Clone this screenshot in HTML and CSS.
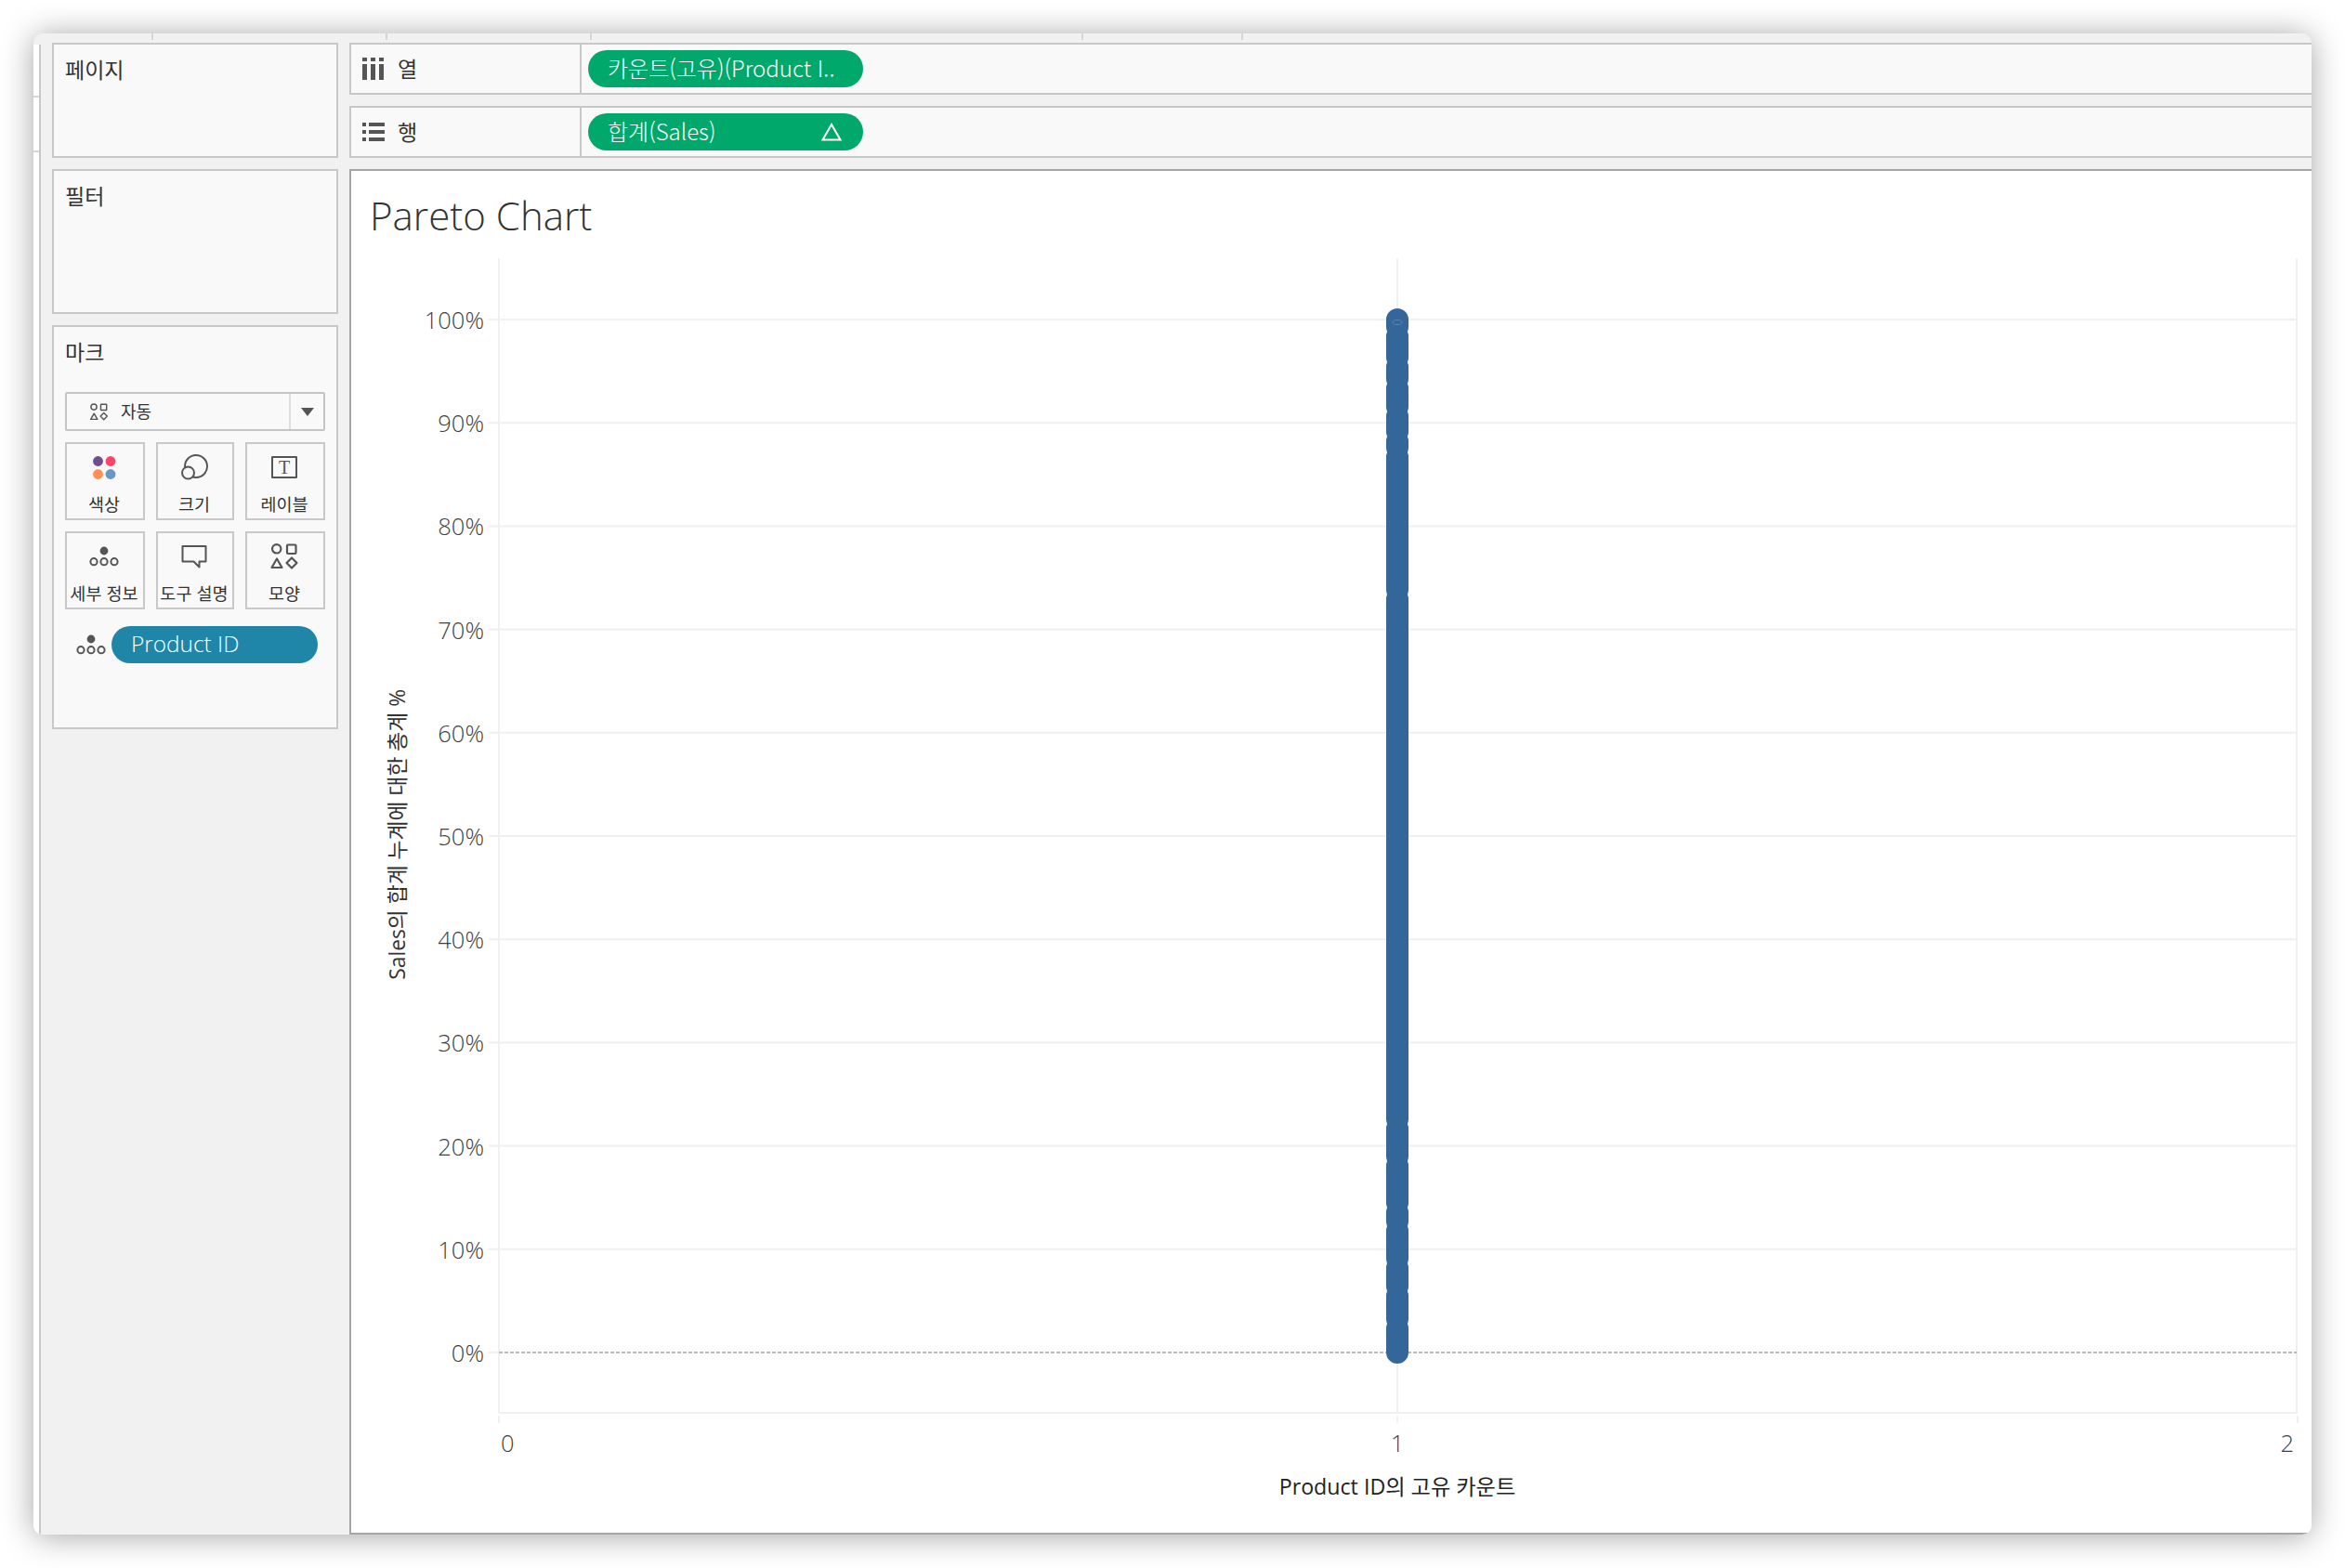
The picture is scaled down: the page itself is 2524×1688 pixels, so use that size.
FILE: index.html
```html
<!DOCTYPE html>
<html lang="ko">
<head>
<meta charset="utf-8">
<title>Pareto Chart</title>
<link rel="stylesheet" href="styles.css">
</head>
<body>
<div class="window">
  <i class="top-tick t1"></i><i class="top-tick t2"></i><i class="top-tick t3"></i><i class="top-tick t4"></i><i class="top-tick t5"></i>
  <div class="strip"><i class="strip-line l1"></i><i class="strip-line l2"></i></div>
  <aside class="sidebar">
    <section class="card card-pages"><h2 class="card-title">페이지</h2></section>
    <section class="card card-filters"><h2 class="card-title">필터</h2></section>
    <section class="card card-marks">
      <h2 class="card-title">마크</h2>
      <div class="select">
        <div class="select-main">
          <svg class="select-icon" viewBox="0 0 32 32"><use href="#shapes"/></svg>
          <span>자동</span>
        </div>
        <div class="select-arrow"><i class="caret"></i></div>
      </div>
      <div class="mark-grid">
        <div class="mark-btn">
          <svg class="mark-icon" viewBox="0 0 32 32"><circle cx="9.5" cy="9.5" r="5.4" fill="#6f4e8c"/><circle cx="23" cy="9.5" r="5.4" fill="#ff4468"/><circle cx="9.5" cy="23.5" r="5.4" fill="#ff8f55"/><circle cx="23" cy="23.5" r="5.4" fill="#6a97c8"/></svg>
          <span>색상</span>
        </div>
        <div class="mark-btn">
          <svg class="mark-icon" viewBox="0 0 32 32"><circle class="ic" cx="18" cy="15" r="12"/><circle class="ic ic-fill" cx="9.5" cy="22" r="6.5"/></svg>
          <span>크기</span>
        </div>
        <div class="mark-btn">
          <svg class="mark-icon" viewBox="0 0 32 32"><rect class="ic" x="3" y="5" width="26" height="22"/><text class="ic-t" x="16" y="23" text-anchor="middle">T</text></svg>
          <span>레이블</span>
        </div>
        <div class="mark-btn">
          <svg class="mark-icon" viewBox="0 0 32 32"><use href="#detail"/></svg>
          <span>세부 정보</span>
        </div>
        <div class="mark-btn">
          <svg class="mark-icon" viewBox="0 0 32 32"><path class="ic" d="M3.5 5H28.5V21.5H21.5V27.5L15.5 21.5H3.5Z"/></svg>
          <span>도구 설명</span>
        </div>
        <div class="mark-btn">
          <svg class="mark-icon" viewBox="0 0 32 32"><use href="#shapes"/></svg>
          <span>모양</span>
        </div>
      </div>
      <div class="mark-field">
        <svg class="field-icon" viewBox="0 0 32 32"><use href="#detail"/></svg>
        <div class="pill pill-blue">Product ID</div>
      </div>
    </section>
  </aside>
  <main class="main">
    <div class="shelf">
      <div class="shelf-label">
        <svg class="shelf-icon" viewBox="0 0 24 24"><path class="solid" d="M0 0h5v4H0zM0 7h5v17H0zM9 0h5v4H9zM9 7h5v17H9zM18 0h5v4h-5zM18 7h5v17h-5z"/></svg>
        <span>열</span>
      </div>
      <div class="shelf-body"><div class="pill pill-green">카운트(고유)(Product I..</div></div>
    </div>
    <div class="shelf">
      <div class="shelf-label">
        <svg class="shelf-icon" viewBox="0 0 24 24"><path class="solid" d="M0 2h4v4H0zM7 2h17v4H7zM0 10h4v4H0zM7 10h17v4H7zM0 18h4v4H0zM7 18h17v4H7z"/></svg>
        <span>행</span>
      </div>
      <div class="shelf-body">
        <div class="pill pill-green pill-split">
          <span>합계(Sales)</span>
          <svg class="delta" viewBox="0 0 22 20"><path d="M11 2L20.5 18.5H1.5Z"/></svg>
        </div>
      </div>
    </div>
    <section class="chart">
      <h1 class="chart-title">Pareto Chart</h1>
      <div class="plot-row">
        <div class="y-title"><span>Sales의 합계 누계에 대한 총계 %</span></div>
        <div class="y-labels">
          <span>100%</span><span>90%</span><span>80%</span><span>70%</span><span>60%</span><span>50%</span><span>40%</span><span>30%</span><span>20%</span><span>10%</span><span>0%</span>
        </div>
        <svg class="plot" viewBox="0 0 1950 1256">
          <path class="grid" d="M0 66H1946M0 177.2H1946M0 288.4H1946M0 399.6H1946M0 510.8H1946M0 622H1946M0 733.2H1946M0 844.4H1946M0 955.6H1946M0 1066.8H1946M0 1178H11M11 1243H1947"/>
          <path class="grid" d="M11 0V1243M978 0V1243M1946 0V1243M11 1246V1254M978 1246V1254M1947 1246V1254"/>
          <path class="zero" d="M11 1178H1946"/>
          <path class="marks" d="M978 66V74M978 84V107M978 117V130M978 140V160M978 170V187M978 197V204M978 214V357M978 367V927M978 937V967M978 977V1017M978 1027V1037M978 1047V1077M978 1087V1107M978 1117V1142M978 1152V1178"/>
          <ellipse class="mark-ring" cx="978" cy="69" rx="5" ry="2.5"/>
        </svg>
      </div>
      <div class="x-axis">
        <div class="x-labels"><span>0</span><span>1</span><span>2</span></div>
        <div class="x-title">Product ID의 고유 카운트</div>
      </div>
    </section>
  </main>
</div>
<svg class="defs" width="0" height="0">
  <defs>
    <g id="shapes" fill="none" stroke="#555" stroke-width="2.2" stroke-linejoin="round">
      <circle cx="7.7" cy="7.8" r="4.7"/>
      <rect x="19" y="3.5" width="9.5" height="9.5" rx="1"/>
      <path d="M2.5 28H13.5L8 18.5Z"/>
      <path d="M24 17.5L29.5 23L24 28.5L18.5 23Z"/>
    </g>
    <g id="detail" fill="none" stroke="#555" stroke-width="2">
      <circle cx="16" cy="10" r="4.4" fill="#555" stroke="none"/>
      <circle cx="5" cy="21.7" r="3.6"/>
      <circle cx="16" cy="21.7" r="3.6"/>
      <circle cx="27" cy="21.7" r="3.6"/>
    </g>
  </defs>
</svg>
</body>
</html>
```

FILE: styles.css
```css
* { box-sizing: border-box; }

html, body { margin: 0; padding: 0; background: #fff; }

body {
  width: 2524px;
  height: 1688px;
  padding: 36px;
  font-family: "Open Sans", "Noto Sans CJK KR", sans-serif;
  color: #333;
  overflow: hidden;
}

.window {
  position: relative;
  display: flex;
  width: 2452px;
  height: 1616px;
  background: #f1f1f1;
  border-radius: 10px;
  box-shadow: 0 2px 34px rgba(0, 0, 0, .36);
  overflow: hidden;
}

.top-tick {
  position: absolute;
  top: 0;
  width: 2px;
  height: 7px;
  background: #d6d6d6;
}
.t1 { left: 127px; }
.t2 { left: 379px; }
.t3 { left: 599px; }
.t4 { left: 1128px; }
.t5 { left: 1300px; }

.strip {
  position: relative;
  flex: none;
  width: 8px;
  margin-top: 12px;
  background: #fff;
  border-right: 2px solid #c8c8c8;
}
.strip-line {
  position: absolute;
  left: 0;
  width: 6px;
  height: 2px;
  background: #d6d6d6;
}
.l1 { top: 55px; }
.l2 { top: 114px; }

.sidebar {
  flex: none;
  width: 332px;
  padding: 10px 12px;
  display: flex;
  flex-direction: column;
  gap: 12px;
}

.card {
  background: #f9f9f9;
  border: 2px solid #c8c8c8;
  padding: 9px 12px;
}
.card-pages { height: 124px; }
.card-filters { height: 156px; }
.card-marks { height: 435px; }

.card-title {
  margin: 0;
  font-size: 23px;
  line-height: 34px;
  font-weight: 400;
  color: #333;
  font-family: "Noto Sans CJK KR", sans-serif;
}

.select {
  display: flex;
  height: 42px;
  margin-top: 27px;
  background: #f9f9f9;
  border: 2px solid #c4c4c4;
  border-radius: 2px;
}
.select-main {
  flex: 1;
  display: flex;
  align-items: center;
  gap: 13px;
  padding-left: 24px;
  font-size: 18px;
  line-height: 24px;
  font-family: "Noto Sans CJK KR", sans-serif;
}
.select-main span { margin-top: -2px; }
.select-icon { width: 21px; height: 21px; }
.select-arrow {
  flex: none;
  width: 37px;
  display: flex;
  align-items: center;
  justify-content: center;
  border-left: 2px solid #dedede;
}
.caret {
  width: 0;
  height: 0;
  border-left: 7px solid transparent;
  border-right: 7px solid transparent;
  border-top: 9px solid #555;
}

.mark-grid {
  display: grid;
  grid-template-columns: 86px 84px 86px;
  grid-template-rows: 84px 84px;
  gap: 12px;
  margin-top: 12px;
}
.mark-btn {
  display: flex;
  flex-direction: column;
  align-items: center;
  border: 2px solid #c8c8c8;
  padding: 9px 2px 0 0;
  font-size: 18.5px;
  line-height: 26px;
  white-space: nowrap;
  font-family: "Noto Sans CJK KR", sans-serif;
}
.mark-btn span { margin-top: 10px; }
.mark-icon { width: 32px; height: 32px; flex: none; }

.ic { fill: none; stroke: #555; stroke-width: 2; stroke-linejoin: round; }
.ic-fill { fill: #f9f9f9; }
.ic-t { font-family: "Liberation Serif", serif; font-size: 20px; fill: #555; }

.mark-field {
  display: flex;
  align-items: center;
  gap: 6px;
  margin-top: 18px;
  padding-left: 12px;
}
.field-icon { width: 32px; height: 32px; flex: none; }

.pill {
  display: flex;
  align-items: center;
  height: 40px;
  border-radius: 20px;
  color: #fff;
  white-space: nowrap;
}
.pill-blue {
  width: 222px;
  padding: 0 0 3px 21px;
  background: #2086a8;
  font-size: 24.4px;
  font-weight: 300;
}
.pill-green {
  width: 296px;
  padding: 0 0 3px 21px;
  background: #00a96b;
  font-size: 24px;
  font-family: "Noto Sans CJK KR", sans-serif;
  font-weight: 300;
}
.pill-split { justify-content: space-between; padding-right: 23px; }
.delta { width: 22px; height: 20px; margin-top: 3px; }
.delta path { fill: none; stroke: #fff; stroke-width: 2; }

.main {
  flex: 1;
  min-width: 0;
  display: flex;
  flex-direction: column;
  gap: 12px;
  padding-top: 10px;
}

.shelf {
  flex: none;
  display: flex;
  height: 56px;
  background: #f9f9f9;
  border-top: 2px solid #c8c8c8;
  border-bottom: 2px solid #c8c8c8;
  border-left: 2px solid #c8c8c8;
}
.shelf-label {
  flex: none;
  width: 248px;
  display: flex;
  align-items: center;
  gap: 14px;
  padding-left: 12px;
  font-size: 23px;
  border-right: 2px solid #c8c8c8;
  font-family: "Noto Sans CJK KR", sans-serif;
}
.shelf-label span { margin-top: -3px; }
.shelf-icon { width: 24px; height: 24px; }
.solid { fill: #555; }
.shelf-body { flex: 1; display: flex; align-items: center; padding-left: 7px; }

.chart {
  flex: 1;
  min-height: 0;
  background: #fff;
  border-top: 2px solid #a5a5a5;
  border-left: 2px solid #a5a5a5;
  border-bottom: 2px solid #a5a5a5;
}

.chart-title {
  margin: 0;
  height: 94px;
  padding: 18px 0 0 20px;
  font-size: 42px;
  line-height: 60px;
  font-weight: 300;
  color: #333;
}

.plot-row { display: flex; height: 1256px; padding-left: 35px; }

.y-title {
  flex: none;
  width: 30px;
  display: flex;
  align-items: center;
  justify-content: center;
  padding-bottom: 16px;
}
.y-title span {
  writing-mode: vertical-rl;
  text-orientation: sideways;
  transform: rotate(180deg);
  font-size: 22.8px;
  line-height: 30px;
  white-space: nowrap;
}

.y-labels {
  flex: none;
  width: 78px;
  height: 1142px;
  margin: 51px 5px 0 0;
  display: flex;
  flex-direction: column;
  justify-content: space-between;
  align-items: flex-end;
  font-size: 25.5px;
  font-weight: 300;
  line-height: 30px;
  color: #3f3f3f;
}

.plot { flex: none; width: 1950px; height: 1256px; }
.grid { fill: none; stroke: #f0f0f0; stroke-width: 2; }
.zero { fill: none; stroke: #b9b9b9; stroke-width: 2; stroke-dasharray: 4 2; }
.marks { fill: none; stroke: #34669a; stroke-width: 24; stroke-linecap: round; }
.mark-ring { fill: none; stroke: #5a83ad; stroke-width: 1; }

.x-axis { margin: 4px 0 0 161px; width: 1930px; }
.x-labels {
  display: flex;
  justify-content: space-between;
  font-size: 25.5px;
  font-weight: 300;
  line-height: 30px;
  color: #3f3f3f;
}
.x-title {
  margin-top: 17px;
  text-align: center;
  font-size: 23.2px;
  line-height: 30px;
  color: #222;
}

.defs { position: absolute; }
```
